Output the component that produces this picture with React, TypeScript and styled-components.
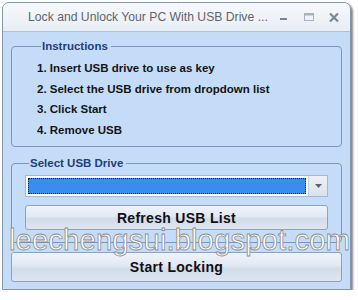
import styled, { createGlobalStyle } from "styled-components";

const GlobalStyle = createGlobalStyle`
  html, body {
    margin: 0;
    padding: 0;
    background: #ffffff;
  }
  body {
    font-family: "Liberation Sans", Arial, sans-serif;
  }
`;

const steps = [
  "1. Insert USB drive to use as key",
  "2. Select the USB drive from dropdown list",
  "3. Click Start",
  "4. Remove USB",
];

export default function App() {
  return (
    <>
      <GlobalStyle />
      <Window>
        <TitleBar>
          <Title>Lock and Unlock Your PC With USB Drive ...</Title>
          <Controls>
            <ControlButton>
              <svg width="10" height="10" viewBox="0 0 10 10">
                <rect x="1" y="6" width="7" height="2" fill="#7a8696" />
              </svg>
            </ControlButton>
            <ControlButton>
              <svg width="12" height="10" viewBox="0 0 12 10">
                <rect x="1.5" y="1.5" width="9" height="7" fill="none" stroke="#a6b2c2" />
                <rect x="1.5" y="1.5" width="9" height="2" fill="#a6b2c2" />
              </svg>
            </ControlButton>
            <ControlButton>
              <svg width="12" height="11" viewBox="0 0 12 11">
                <path d="M2 1.5 L10 9.5 M10 1.5 L2 9.5" stroke="#7a8696" strokeWidth="2.2" />
              </svg>
            </ControlButton>
          </Controls>
        </TitleBar>
        <Body>
          <Group $pad="5px 10px 6px 25px">
            <Legend>Instructions</Legend>
            <StepList>
              {steps.map((s) => (
                <Step key={s}>{s}</Step>
              ))}
            </StepList>
          </Group>
          <Group $pad="5px 13px 12px">
            <Legend>Select USB Drive</Legend>
            <Combo>
              <ComboField>
                <ComboSelection />
              </ComboField>
              <ComboArrow>
                <svg width="7" height="4" viewBox="0 0 7 4">
                  <path d="M0 0 H7 L3.5 4 Z" fill="#5a6470" />
                </svg>
              </ComboArrow>
            </Combo>
            <Button $height={25}>Refresh USB List</Button>
          </Group>
          <Button $height={30}>Start Locking</Button>
        </Body>
        <Watermark>leechengsui.blogspot.com</Watermark>
      </Window>
    </>
  );
}

const Window = styled.div`
  position: relative;
  width: 347px;
  margin: 2px 0 0 2px;
  border: 1px solid #8496ac;
  border-radius: 7px 7px 0 0;
  background: #c4dcf8;
  box-shadow: 2px 2px 2px rgba(40, 40, 40, 0.55);
  overflow: hidden;
`;

const TitleBar = styled.div`
  height: 28px;
  display: flex;
  align-items: center;
  justify-content: space-between;
  padding: 0 10px 0 25px;
  background: linear-gradient(#f6f8fb, #e8eef6);
  border-bottom: 1px solid #aac2de;
`;

const Title = styled.div`
  font-size: 12.2px;
  color: #5f646c;
  white-space: nowrap;
`;

const Controls = styled.div`
  display: flex;
  flex-shrink: 0;
  align-items: center;
  gap: 12px;
`;

const ControlButton = styled.div`
  width: 13px;
  height: 12px;
  display: flex;
  align-items: center;
  justify-content: center;
`;

const Body = styled.div`
  display: flex;
  flex-direction: column;
  gap: 9px;
  padding: 7px 8px 7px 8px;
`;

const Group = styled.fieldset<{ $pad: string }>`
  margin: 0;
  min-width: 0;
  padding: ${(p) => p.$pad};
  border: 1px solid #7b96b8;
  border-radius: 4px;
  display: flex;
  flex-direction: column;
  gap: 8px;
`;

const Legend = styled.legend`
  margin-left: 4px;
  padding: 0 3px 0 1px;
  font-size: 11.5px;
  line-height: 14px;
  font-weight: bold;
  color: #1d3f7a;
`;

const StepList = styled.div`
  display: flex;
  flex-direction: column;
`;

const Step = styled.div`
  font-size: 11.5px;
  line-height: 20.5px;
  font-weight: bold;
  color: #141414;
`;

const Combo = styled.div`
  height: 22px;
  box-sizing: border-box;
  display: flex;
  border: 1px solid #a8b8cc;
  background: #ffffff;
`;

const ComboField = styled.div`
  flex: 1;
  padding: 2px;
`;

const ComboSelection = styled.div`
  height: 100%;
  box-sizing: border-box;
  background: #3b8ded;
  border: 1px dotted #1a1a1a;
`;

const ComboArrow = styled.div`
  width: 18px;
  display: flex;
  align-items: center;
  justify-content: center;
  background: linear-gradient(#eef2f7, #d9e1eb);
  border-left: 1px solid #c4ceda;
`;

const Button = styled.div<{ $height: number }>`
  height: ${(p) => p.$height}px;
  box-sizing: border-box;
  display: flex;
  align-items: center;
  justify-content: center;
  border: 1px solid #8ea2bb;
  border-radius: 3px;
  background: linear-gradient(#eef3fa 0%, #e1e9f3 45%, #d2dcea 55%, #dde6f1 100%);
  font-size: 14px;
  font-weight: bold;
  color: #111111;
  letter-spacing: 0.3px;
`;

const Watermark = styled.div`
  position: absolute;
  left: 6px;
  top: 221px;
  font-size: 29.5px;
  line-height: 32px;
  color: #ffffff;
  -webkit-text-stroke: 0.8px #8c8c8c;
  pointer-events: none;
`;
